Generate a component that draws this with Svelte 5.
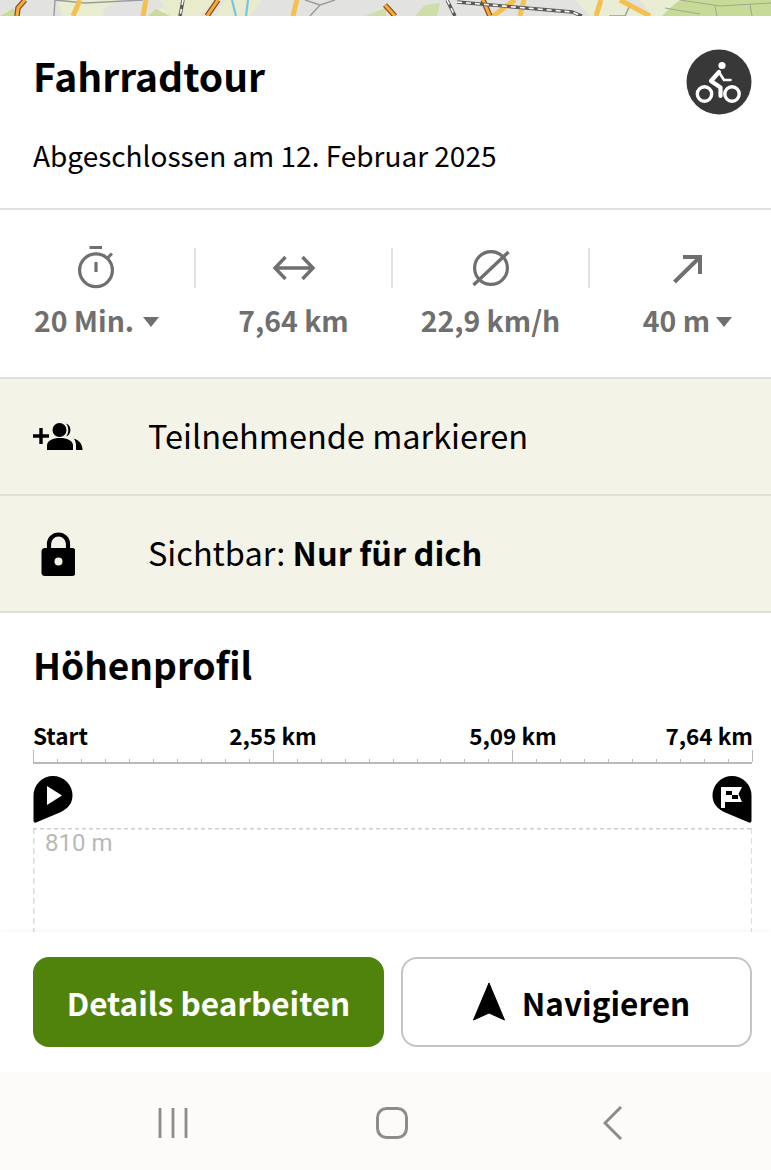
<script>
  const stats = [
    { value: '20 Min.', icon: 'timer', caret: true },
    { value: '7,64 km', icon: 'distance' },
    { value: '22,9 km/h', icon: 'speed' },
    { value: '40 m', icon: 'up', caret: true }
  ];
  const ticks = Array.from({ length: 31 }, (_, i) => i);
</script>

<div class="page">
  <svg class="map" viewBox="0 0 771 16" aria-hidden="true">
    <rect width="771" height="16" fill="#e2e2e1" />
    <path d="M0 16L8 10L14 16Z M85 16L100 5L105 16Z M150 16L162 7L172 16Z M58 0H120L92 16H62Z" fill="#e9eed0" />
    <path d="M148 16L156 9L170 16Z M0 16L14 8L15 16Z" fill="#c9da9c" />
    <path d="M160 0H215L200 16H170Z M225 0H262L250 16H215Z" fill="#e8eccd" />
    <path d="M365 16L386 8L386 16Z M415 16L425 5L440 3L437 16Z" fill="#cfdea8" />
    <path d="M575 0H625L650 16H590Z" fill="#e8edd4" />
    <path d="M640 0H680L665 16H652Z" fill="#e8edd4" />
    <path d="M662 16L670 8L680 0H771V16Z" fill="#c8da98" />
    <path d="M55 0L54 16M55 0L85 3L143 0M305 0L320 5L335 0M320 5L310 16M609 16H625L630 5" stroke="#9b9b9b" stroke-width="1.4" fill="none" />
    <path d="M665 8L700 14M680 0L720 6L771 3M715 6L717 16M750 4L752 16" stroke="#9fa98c" stroke-width="1" fill="none" />
    <path d="M73 16L80 0M143 16L146 0M293 16L297 0M493 16L515 0M520 16L524 0M596 16L601 0M620 0L650 16" stroke="#f5c050" stroke-width="5" fill="none" />
    <path d="M17 16L18 8L25 0M207 16L218 0M385 5L395 16M483 0L490 16" stroke="#8a4f18" stroke-width="5.5" fill="none" />
    <path d="M17 16L18 8L25 0M207 16L218 0M385 5L395 16M483 0L490 16" stroke="#f7ab3a" stroke-width="3" fill="none" />
    <path d="M183 0L180 16M447 0L455 16M457 2L572 12L582 16" stroke="#5a5a5a" stroke-width="3.4" fill="none" />
    <path d="M183 0L180 16M447 0L455 16M457 2L572 12L582 16" stroke="#fff" stroke-width="1.6" stroke-dasharray="5 4" fill="none" />
    <path d="M232 0L236 16M248 0L246 16" stroke="#74c5e6" stroke-width="2.2" fill="none" />
  </svg>

  <header class="head">
    <div class="title-row">
      <h1>Fahrradtour</h1>
      <div class="sport">
        <svg viewBox="0 0 66 66" width="66" height="66" aria-hidden="true">
          <circle cx="33" cy="33" r="32.5" fill="#383838" />
          <circle cx="36" cy="16.5" r="3.6" fill="#fff" />
          <path d="M33 23L25 32L34.5 38.5V47" fill="none" stroke="#fff" stroke-width="4.2" stroke-linejoin="round" stroke-linecap="round" />
          <path d="M33.5 24L38 31H44.5" fill="none" stroke="#fff" stroke-width="2.6" stroke-linejoin="round" stroke-linecap="round" />
          <circle cx="18.5" cy="45" r="7.2" fill="none" stroke="#fff" stroke-width="3.4" />
          <circle cx="46" cy="45" r="7.2" fill="none" stroke="#fff" stroke-width="3.4" />
        </svg>
      </div>
    </div>
    <p class="date">Abgeschlossen am 12. Februar 2025</p>
  </header>

  <section class="stats">
    {#each stats as s}
      <div class="stat">
        <svg class="stat-icon" viewBox="0 0 44 44" width="44" height="44" aria-hidden="true">
          {#if s.icon === 'timer'}
            <path d="M14.5 2.5H27" stroke="#6f6f6f" stroke-width="3" />
            <circle cx="21" cy="25.3" r="16.4" fill="none" stroke="#6f6f6f" stroke-width="3.2" />
            <path d="M21 17V27" stroke="#6f6f6f" stroke-width="3.2" />
            <path d="M33 12.5L37 8.5" stroke="#6f6f6f" stroke-width="3" />
          {:else if s.icon === 'distance'}
            <path d="M4 23H40M13.5 12L3 23L13.5 34M30.5 12L41 23L30.5 34" fill="none" stroke="#6f6f6f" stroke-width="3.4" />
          {:else if s.icon === 'speed'}
            <circle cx="22" cy="23" r="16.4" fill="none" stroke="#6f6f6f" stroke-width="3.2" />
            <path d="M4.5 40L39.5 7" stroke="#6f6f6f" stroke-width="3.4" />
          {:else}
            <path d="M8.5 37L34 12M17 12H34V29" fill="none" stroke="#6f6f6f" stroke-width="4" />
          {/if}
        </svg>
        <div class="stat-value">
          {s.value}
          {#if s.caret}<span class="caret"></span>{/if}
        </div>
      </div>
    {/each}
  </section>

  <button class="row" type="button">
    <span class="row-icon">
      <svg viewBox="0 0 50 28" width="50" height="28" aria-hidden="true">
        <path d="M0 13H16M8 5V21" stroke="#000" stroke-width="3.4" />
        <circle cx="26.5" cy="7" r="7" />
        <path d="M14 27V22.5C14 17.5 20 15 27 15S40 17.5 40 22.5V27Z" />
        <path d="M33 0.5A7 7 0 0 1 33 13.5C36 10 36 4 33 0.5Z M40.5 15.5C46 17 49.5 21 49.5 27H43V23C43 20 42.5 17.5 40.5 15.5Z" />
      </svg>
    </span>
    <span>Teilnehmende markieren</span>
  </button>
  <button class="row second" type="button">
    <span class="row-icon">
      <svg viewBox="0 0 34 44" width="34" height="44" aria-hidden="true">
        <path d="M8 19V12A9.5 9.5 0 0 1 27 12V19" fill="none" stroke="#000" stroke-width="4.2" />
        <rect x="0.5" y="16" width="34" height="28" rx="3.5" />
        <circle cx="17.5" cy="29.5" r="4" fill="#f3f3e7" />
      </svg>
    </span>
    <span>Sichtbar: <b>Nur für dich</b></span>
  </button>

  <section class="profile">
    <h2>Höhenprofil</h2>
    <div class="axis-labels">
      <span>Start</span>
      <span class="mid">2,55 km</span>
      <span class="mid">5,09 km</span>
      <span class="end">7,64 km</span>
    </div>
    <div class="axis">
      {#each ticks as t}
        <i class:major={t % 10 === 0} style="left:{t * 23.97}px"></i>
      {/each}
    </div>
    <div class="pins">
      <svg viewBox="0 0 40 47" width="40" height="47" aria-hidden="true">
        <path d="M20 0A19.5 19.5 0 0 1 39.5 19.5C39.5 28 34 33 28 36L3 46.5C1.5 47 0.5 46 0.5 44.5V19.5A19.5 19.5 0 0 1 20 0Z" />
        <path d="M14 10L29 19.5L14 29Z" fill="#fff" />
      </svg>
      <svg viewBox="0 0 40 47" width="40" height="47" aria-hidden="true">
        <path d="M20 0A19.5 19.5 0 0 0 0.5 19.5C0.5 28 6 33 12 36L37 46.5C38.5 47 39.5 46 39.5 44.5V19.5A19.5 19.5 0 0 0 20 0Z" />
        <path d="M9 11H30L26.5 18L30 26H13V32H9Z" fill="#fff" />
        <path d="M14 15H20V19H14ZM20 19H26V23H20Z" />
      </svg>
    </div>
    <div class="chart"><span>810 m</span></div>
  </section>

  <footer class="actions">
    <button class="btn primary" type="button">Details bearbeiten</button>
    <button class="btn outline" type="button">
      <svg viewBox="0 0 32 38" width="32" height="38" aria-hidden="true">
        <path d="M16 0L31.5 37L16 30L0.5 37Z" stroke="#000" stroke-linejoin="round" />
      </svg>
      Navigieren
    </button>
  </footer>

  <nav class="sysbar">
    <svg viewBox="0 0 32 32" width="32" height="32" aria-hidden="true">
      <path d="M3 1V31M16 1V31M29 1V31" stroke="#8c8c8c" stroke-width="2.8" />
    </svg>
    <svg viewBox="0 0 32 32" width="32" height="32" aria-hidden="true">
      <rect x="1.5" y="1.5" width="29" height="29" rx="9" fill="none" stroke="#8c8c8c" stroke-width="3" />
    </svg>
    <svg class="back" viewBox="0 0 20 34" width="20" height="34" aria-hidden="true">
      <path d="M18 1L2 17L18 33" fill="none" stroke="#8c8c8c" stroke-width="3" />
    </svg>
  </nav>
</div>

<style>
  :global(body) {
    margin: 0;
    background: #fff;
  }

  .page {
    width: 771px;
    height: 1170px;
    overflow: hidden;
    display: flex;
    flex-direction: column;
    font-family: "Noto Sans CJK SC", "Noto Sans", sans-serif;
    color: #000;
  }

  .map {
    display: block;
    width: 771px;
    height: 16px;
    flex: none;
  }

  .head {
    height: 194px;
    flex: none;
    box-sizing: border-box;
    padding: 33px 19px 0 33px;
    border-bottom: 2px solid #e2e2e2;
  }

  .title-row {
    display: flex;
    justify-content: space-between;
    align-items: flex-start;
  }

  h1 {
    margin: -2px 0 0;
    font-size: 39px;
    line-height: 56px;
    font-weight: 700;
  }

  .sport {
    height: 66px;
  }

  .date {
    margin: 20px 0 0;
    font-size: 28px;
    line-height: 40px;
    font-weight: 400;
  }

  .stats {
    height: 169px;
    flex: none;
    box-sizing: border-box;
    border-bottom: 2px solid #dfdfdf;
    display: grid;
    grid-template-columns: repeat(4, 197px);
    align-items: start;
    padding-top: 35px;
    margin-left: -2px;
  }

  .stat {
    position: relative;
    display: flex;
    flex-direction: column;
    align-items: center;
  }

  .stat:not(:last-child)::after {
    content: "";
    position: absolute;
    right: -1px;
    top: 3px;
    width: 2px;
    height: 40px;
    background: #e2e2e2;
  }

  .stat-icon {
    flex: none;
  }

  .stat-value {
    margin-top: 12px;
    font-size: 28.4px;
    line-height: 38px;
    font-weight: 700;
    color: #6f6f6f;
    white-space: nowrap;
    display: flex;
    align-items: center;
    gap: 9px;
  }

  .stat:last-child .stat-value {
    gap: 6px;
  }

  .caret {
    width: 0;
    height: 0;
    border-left: 8px solid transparent;
    border-right: 8px solid transparent;
    border-top: 10px solid #6f6f6f;
    margin-top: 4px;
  }

  .row {
    height: 117px;
    flex: none;
    box-sizing: border-box;
    display: flex;
    align-items: center;
    width: 100%;
    padding: 0 0 5px;
    border: 0;
    border-bottom: 2px solid #dedfd6;
    background: #f3f3e7;
    font: inherit;
    font-size: 32.5px;
    color: #000;
    text-align: left;
  }

  .row-icon {
    width: 148px;
    margin-top: 5px;
    padding-left: 33px;
    box-sizing: border-box;
    display: flex;
    flex: none;
  }

  .second .row-icon {
    padding-left: 41px;
  }

  .row b {
    font-weight: 700;
  }

  .profile {
    flex: 1;
    min-height: 0;
    padding: 0 19px 0 33px;
    overflow: hidden;
  }

  h2 {
    margin: 27px 0 0;
    font-size: 37px;
    line-height: 48px;
    font-weight: 700;
  }

  .axis-labels {
    display: grid;
    grid-template-columns: repeat(6, 120px);
    margin-top: 32px;
    font-size: 22.5px;
    line-height: 30px;
    font-weight: 700;
    white-space: nowrap;
  }

  .axis-labels .mid {
    grid-column: span 2;
    text-align: center;
  }

  .axis-labels .end {
    text-align: right;
  }

  .axis {
    position: relative;
    height: 12px;
    border-bottom: 2px solid #b9b9b9;
  }

  .axis i {
    position: absolute;
    bottom: 0;
    width: 1px;
    height: 3px;
    background: #b9b9b9;
  }

  .axis i.major {
    height: 12px;
  }

  .pins {
    display: flex;
    justify-content: space-between;
    margin-top: 12px;
    height: 47px;
  }

  .chart {
    margin-top: 5px;
    height: 160px;
    box-sizing: border-box;
    padding-left: 12px;
    background:
      repeating-linear-gradient(90deg, #cfcfcf 0 4px, transparent 4px 7px) top left / 100% 1.5px no-repeat,
      repeating-linear-gradient(180deg, #dcdcdc 0 6px, transparent 6px 10px) top left / 1.5px 100% no-repeat,
      repeating-linear-gradient(180deg, #dcdcdc 0 6px, transparent 6px 10px) top right / 1.5px 100% no-repeat;
  }

  .chart span {
    font-family: Roboto, sans-serif;
    font-size: 24px;
    line-height: 30px;
    color: #b9b9b9;
  }

  .actions {
    height: 140px;
    flex: none;
    box-sizing: border-box;
    padding: 25px 19px 0 33px;
    display: grid;
    grid-template-columns: 351px 351px;
    gap: 17px;
    background: #fff;
    box-shadow: 0 -2px 4px rgba(0, 0, 0, 0.03);
    position: relative;
  }

  .btn {
    height: 90px;
    border-radius: 16px;
    font: inherit;
    font-size: 31.5px;
    font-weight: 700;
    display: flex;
    align-items: center;
    justify-content: center;
    gap: 17px;
    padding: 0;
  }

  .primary {
    background: #50830c;
    border: 0;
    color: #fff;
  }

  .outline {
    background: #fff;
    border: 2px solid #c4c4c4;
    color: #000;
    padding-left: 10px;
  }

  .sysbar {
    height: 98px;
    flex: none;
    box-sizing: border-box;
    padding: 4px 0 0 157px;
    background: #fcfbf9;
    display: flex;
    align-items: center;
    gap: 187px;
  }

  .back {
    margin-left: 8px;
  }
</style>
